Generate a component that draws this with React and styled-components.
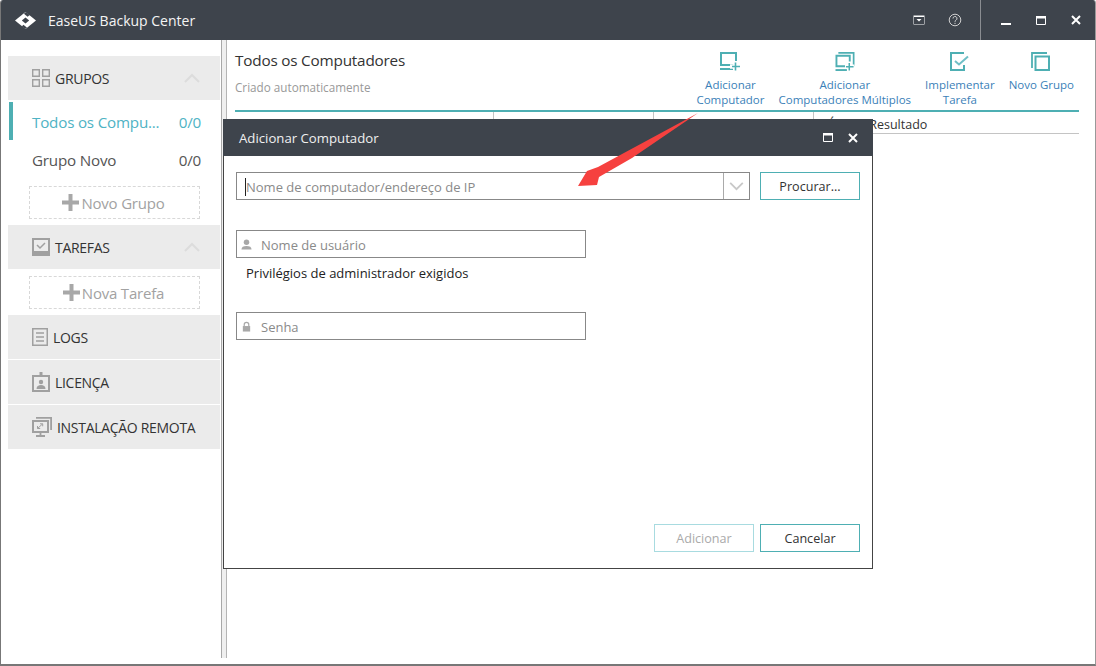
import React from 'react';
import styled, { createGlobalStyle } from 'styled-components';

const font = '"Open Sans", "Noto Sans", sans-serif';
const teal = '#4eafb3';

const GlobalStyle = createGlobalStyle`
  html, body { margin: 0; padding: 0; background: #fff; }
  body { font-family: ${font}; }
  * { box-sizing: border-box; }
`;

const PlusIcon = () => (
  <PlusMark viewBox="0 0 17 17">
    <path d="M0 6.500h17v4H0zM6.500 0h4v17h-4z" fill="#a8a8a8" />
  </PlusMark>
);

const App = () => (
  <>
    <GlobalStyle />
    <Window>
      <TitleBar>
        <Logo viewBox="0 0 20 20" preserveAspectRatio="none">
          <path d="M10 0 L20 10 L10 20 L0 10 Z" fill="#fff" />
          <path d="M10 6.500 L13.500 10 L10 13.500 L6.500 10 Z" fill="#3e444c" />
          <path d="M10.500 0 L14 3.500 L12 5.500 L8.500 2 Z" fill="#3e444c" />
          <path d="M9.500 20 L6.500 17 L8 15 L11.500 18.500 Z" fill="#3e444c" />
        </Logo>
        <AppName>EaseUS Backup Center</AppName>
        <TitleTools>
          <BarIcon viewBox="0 0 12 10" width="12" height="10">
            <path d="M.5.5h11v9H.5z" fill="#fff" />
            <path d="M1 2h10v7H1z" fill="#3e444c" />
            <path d="M3.500 4h5L6 6.500z" fill="#fff" />
          </BarIcon>
          <HelpIcon viewBox="0 0 14 14" width="14" height="14">
            <circle cx="7" cy="7" r="5.800" fill="none" stroke="#d0d0d0" strokeWidth="1" />
            <path d="M5 5.500a2 2 0 1 1 3 1.700c-.7.4-1 .8-1 1.600M7 9.800v1.200" fill="none" stroke="#d0d0d0" strokeWidth="1" />
          </HelpIcon>
        </TitleTools>
        <WindowControls>
          <BarIcon viewBox="0 0 10 10" width="10" height="10">
            <path d="M0 8h10v2H0z" fill="#fff" />
          </BarIcon>
          <BarIcon viewBox="0 0 10 9" width="10" height="9">
            <path d="M.5.5h9v8h-9z" fill="none" stroke="#fff" />
            <path d="M0 0h10v2.500H0z" fill="#fff" />
          </BarIcon>
          <BarIcon viewBox="0 0 10 10" width="10" height="10">
            <path d="M1 1l8 8M9 1l-8 8" stroke="#fff" strokeWidth="2" fill="none" />
          </BarIcon>
        </WindowControls>
      </TitleBar>

      <Body>
        <Sidebar>
          <SectionHead>
            <SideIcon viewBox="0 0 18 18">
              <path d="M.7.7h6.600v6.600H.7zM10.700.7h6.600v6.600h-6.600zM.7 10.700h6.600v6.600H.7zM10.700 10.700h6.600v6.600h-6.600z" fill="none" stroke="#a0a0a0" strokeWidth="1.400" />
            </SideIcon>
            <SectionLabel>GRUPOS</SectionLabel>
            <Chevron viewBox="0 0 16 10"><path d="M1 9l7-7 7 7" fill="none" stroke="#dcdcdc" strokeWidth="2" /></Chevron>
          </SectionHead>
          <GroupRow $active>
            <span>Todos os Compu...</span>
            <span>0/0</span>
          </GroupRow>
          <GroupRow>
            <span>Grupo Novo</span>
            <span>0/0</span>
          </GroupRow>
          <AddSlot $mt={6}><PlusIcon />Novo Grupo</AddSlot>

          <SectionHead $mt={6}>
            <SideIcon viewBox="0 0 18 18">
              <path d="M0 0h18v18H0z" fill="#a0a0a0" />
              <path d="M2 2h14v11H2z" fill="#ececec" />
              <path d="M5 7l3 3 5-5" fill="none" stroke="#a0a0a0" strokeWidth="1.500" />
            </SideIcon>
            <SectionLabel>TAREFAS</SectionLabel>
            <Chevron viewBox="0 0 16 10"><path d="M1 9l7-7 7 7" fill="none" stroke="#dcdcdc" strokeWidth="2" /></Chevron>
          </SectionHead>
          <AddSlot $mt={7}><PlusIcon />Nova Tarefa</AddSlot>

          <SectionHead $mt={6}>
            <SideIcon viewBox="0 0 16 18" $w={16}>
              <path d="M.75.75h14.500v16.500H.75z" fill="none" stroke="#a0a0a0" strokeWidth="1.500" />
              <path d="M4 5h8M4 9h8M4 13h8" stroke="#a0a0a0" strokeWidth="1.500" />
            </SideIcon>
            <SectionLabel>LOGS</SectionLabel>
          </SectionHead>
          <SectionHead $mt={1}>
            <SideIcon viewBox="0 0 18 20" $h={20}>
              <path d="M0 3h18v17H0z" fill="#a0a0a0" />
              <path d="M2 5h14v13H2z" fill="#ececec" />
              <path d="M7.500 0h3v4h-3z" fill="#a0a0a0" />
              <circle cx="9" cy="10" r="2.200" fill="#a0a0a0" />
              <path d="M4.500 17c0-3 2-4 4.500-4s4.500 1 4.500 4z" fill="#a0a0a0" />
            </SideIcon>
            <SectionLabel>LICENÇA</SectionLabel>
          </SectionHead>
          <SectionHead $mt={1}>
            <SideIcon viewBox="0 0 20 20" $w={20} $h={20}>
              <path d="M4 .9h15.100v12.100" fill="none" stroke="#a0a0a0" strokeWidth="1.800" />
              <path d="M1 4h15v11H1z" fill="none" stroke="#a0a0a0" strokeWidth="2" />
              <path d="M4 19h9M8.500 15.500V19" stroke="#a0a0a0" strokeWidth="1.800" />
              <path d="M5.500 11.500l5-4.500M8 6.800h2.700v2.500M5.500 9v2.500h2.700" fill="none" stroke="#a0a0a0" strokeWidth="1" />
            </SideIcon>
            <SectionLabel>INSTALAÇÃO REMOTA</SectionLabel>
          </SectionHead>
        </Sidebar>

        <Splitter />

        <Main>
          <MainHead>
            <div>
              <MainTitle>Todos os Computadores</MainTitle>
              <MainSub>Criado automaticamente</MainSub>
            </div>
            <Toolbar>
              <ToolButton>
                <ToolIcon viewBox="0 0 20 19">
                  <path d="M1 1h15v12H1z" fill="none" stroke={teal} strokeWidth="2" />
                  <path d="M0 17h13" stroke={teal} strokeWidth="2" />
                  <path d="M10 14.500h10M15.500 9v10" stroke="#fff" strokeWidth="4.500" />
                  <path d="M12 14.500h8M15.500 10.500v8" stroke={teal} strokeWidth="1.600" />
                </ToolIcon>
                Adicionar<br />Computador
              </ToolButton>
              <ToolButton>
                <ToolIcon viewBox="0 0 20 20">
                  <path d="M3 .9h16.100v14" fill="none" stroke={teal} strokeWidth="1.800" />
                  <path d="M1 4h14v11H1z" fill="#fff" stroke={teal} strokeWidth="2" />
                  <path d="M0 19h12" stroke={teal} strokeWidth="2" />
                  <path d="M10 15.500h10M14.500 10v10" stroke="#fff" strokeWidth="4.500" />
                  <path d="M11 15.500h8M14.500 11.500v8" stroke={teal} strokeWidth="1.600" />
                </ToolIcon>
                Adicionar<br />Computadores Múltiplos
              </ToolButton>
              <ToolButton>
                <ToolIcon viewBox="0 0 20 19">
                  <path d="M14 1H1v17h13v-5" fill="none" stroke={teal} strokeWidth="2" />
                  <path d="M5 9l4 3.500 9-8" fill="none" stroke="#6fbfc6" strokeWidth="2" />
                </ToolIcon>
                Implementar<br />Tarefa
              </ToolButton>
              <ToolButton>
                <ToolIcon viewBox="0 0 20 19">
                  <path d="M1 16V1h15" fill="none" stroke={teal} strokeWidth="1.800" />
                  <path d="M4.500 4.500h13.500v13.500H4.500z" fill="none" stroke={teal} strokeWidth="2" />
                </ToolIcon>
                Novo Grupo
              </ToolButton>
            </Toolbar>
          </MainHead>
          <TableHead>
            <HeadCell $w={259} />
            <HeadCell $w={160} />
            <HeadCell $w={160} />
            <HeadCell>Último Resultado</HeadCell>
          </TableHead>
        </Main>
      </Body>

      <Dialog>
        <DialogBar>
          <DialogTitle>Adicionar Computador</DialogTitle>
          <DialogControls>
            <BarIcon viewBox="0 0 10 9" width="10" height="9">
              <path d="M.5.5h9v8h-9z" fill="none" stroke="#fff" />
              <path d="M0 0h10v2.500H0z" fill="#fff" />
            </BarIcon>
            <BarIcon viewBox="0 0 10 10" width="10" height="10">
              <path d="M1 1l8 8M9 1l-8 8" stroke="#fff" strokeWidth="2" fill="none" />
            </BarIcon>
          </DialogControls>
        </DialogBar>
        <DialogBody>
          <ComputerRow>
            <ComboBox>
              <ComboText><Caret />Nome de computador/endereço de IP</ComboText>
              <ComboArrow>
                <svg viewBox="0 0 16 10" width="15" height="9">
                  <path d="M1 1l7 7 7-7" fill="none" stroke="#c8c8c8" strokeWidth="2" />
                </svg>
              </ComboArrow>
            </ComboBox>
            <OutlineButton>Procurar...</OutlineButton>
          </ComputerRow>
          <Field $mt={30}>
            <FieldIcon viewBox="0 0 12 12">
              <circle cx="6" cy="3.500" r="3" fill="#a8a8a8" />
              <path d="M.5 11.500c0-3 2-4 5.500-4s5.500 1 5.500 4z" fill="#a8a8a8" />
            </FieldIcon>
            Nome de usuário
          </Field>
          <Hint>Privilégios de administrador exigidos</Hint>
          <Field $mt={25}>
            <FieldIcon viewBox="0 0 12 12">
              <path d="M3.500 6V4a2.500 2.500 0 0 1 5 0v2" fill="none" stroke="#a8a8a8" strokeWidth="1.300" />
              <path d="M2 5.500h8v6H2z" fill="#a8a8a8" />
            </FieldIcon>
            Senha
          </Field>
          <DialogFooter>
            <OutlineButton $disabled>Adicionar</OutlineButton>
            <OutlineButton>Cancelar</OutlineButton>
          </DialogFooter>
        </DialogBody>
      </Dialog>

      <Arrow viewBox="0 0 1096 666" width="1096" height="666">
        <path d="M698 113 L598 167 L587 171 L578 186 L597 185 L599 177 L632 158 Z" fill="#f6413f" />
      </Arrow>
    </Window>
  </>
);

export default App;

const Window = styled.div`
  position: relative;
  width: 1096px;
  height: 666px;
  border: 1px solid #777;
  border-top: 0;
  border-bottom-width: 2px;
  border-right-color: #999;
  border-radius: 3px 3px 0 0;
  background: #fff;
  overflow: hidden;
  display: flex;
  flex-direction: column;
`;

const TitleBar = styled.div`
  height: 40px;
  flex: none;
  margin: 0 -1px;
  background: #3e444c;
  display: flex;
  align-items: center;
  color: #fff;
`;

const Logo = styled.svg`
  width: 21px;
  height: 17px;
  margin-left: 15px;
`;

const AppName = styled.div`
  margin-left: 12px;
  font-size: 14px;
  color: #f4f4f4;
`;

const TitleTools = styled.div`
  margin-left: auto;
  display: flex;
  align-items: center;
  gap: 23px;
  padding-right: 18px;
`;

const WindowControls = styled.div`
  height: 40px;
  width: 116px;
  border-left: 1px solid #8a8d91;
  display: flex;
  align-items: center;
  gap: 25px;
  padding-left: 20px;
`;

const BarIcon = styled.svg`
  display: block;
  flex: none;
`;

const HelpIcon = styled.svg`
  display: block;
`;

const Body = styled.div`
  flex: 1;
  display: flex;
  min-height: 0;
`;

const Sidebar = styled.div`
  width: 212px;
  margin-left: 7px;
  padding-top: 16px;
  flex: none;
`;

const SectionHead = styled.div`
  height: 44px;
  margin-top: ${(p) => p.$mt || 0}px;
  padding-left: 24px;
  background: #ebebeb;
  display: flex;
  align-items: center;
  position: relative;
`;

const SideIcon = styled.svg`
  width: ${(p) => p.$w || 18}px;
  height: ${(p) => p.$h || 18}px;
  flex: none;
`;

const SectionLabel = styled.span`
  margin-left: 5px;
  padding-top: 1px;
  font-size: 14px;
  letter-spacing: -0.300px;
  color: #333;
`;

const Chevron = styled.svg`
  width: 16px;
  height: 10px;
  margin-left: auto;
  margin-right: 20px;
`;

const GroupRow = styled.div`
  height: ${(p) => (p.$active ? 38 : 40)}px;
  margin: ${(p) => (p.$active ? '2px 0 0 1px' : '0 0 0 1px')};
  padding: ${(p) => (p.$active ? '1px 19px 0 19px' : '0 19px')};
  border-left: 4px solid ${(p) => (p.$active ? teal : 'transparent')};
  display: flex;
  align-items: center;
  justify-content: space-between;
  font-size: 15.200px;
  letter-spacing: -0.200px;
  color: ${(p) => (p.$active ? '#4fb3c4' : '#555')};
`;

const AddSlot = styled.div`
  width: 171px;
  height: 33px;
  margin: ${(p) => p.$mt || 0}px 0 0 21px;
  padding-right: 2px;
  border: 1px dashed #d8d8d8;
  display: flex;
  align-items: center;
  justify-content: center;
  gap: 2px;
  font-size: 15px;
  letter-spacing: -0.200px;
  color: #a2a2a2;
`;

const PlusMark = styled.svg`
  width: 17px;
  height: 17px;
  flex: none;
`;

const Splitter = styled.div`
  width: 6px;
  flex: none;
  height: 618px;
  margin-left: 1px;
  background: #efefef;
  border-left: 1px solid #a8a8a8;
  border-right: 1px solid #b4b4b4;
`;

const Main = styled.div`
  flex: 1;
  padding: 0 16px 0 8px;
  min-width: 0;
`;

const MainHead = styled.div`
  height: 72px;
  display: flex;
  justify-content: space-between;
  border-bottom: 2px solid ${teal};
`;

const MainTitle = styled.div`
  margin-top: 10px;
  font-size: 15.300px;
  letter-spacing: -0.200px;
  color: #333;
`;

const MainSub = styled.div`
  margin-top: 9px;
  font-size: 11.700px;
  color: #999;
`;

const Toolbar = styled.div`
  display: flex;
  align-items: flex-start;
  gap: 14px;
  padding: 12px 5px 0 0;
`;

const ToolButton = styled.div`
  display: flex;
  flex-direction: column;
  align-items: center;
  text-align: center;
  font-size: 11.500px;
  line-height: 15px;
  color: #3b7fb8;
`;

const ToolIcon = styled.svg`
  width: 20px;
  height: 19px;
  margin-bottom: 6px;
`;

const TableHead = styled.div`
  height: 22px;
  display: flex;
  border-bottom: 1px solid #c4c4c4;
`;

const HeadCell = styled.div`
  ${(p) => (p.$w ? `width: ${p.$w}px; flex: none;` : 'flex: 1;')}
  border-right: ${(p) => (p.$w ? '1px solid #c4c4c4' : '0')};
  padding-left: 13px;
  font-size: 12.500px;
  line-height: 25px;
  color: #333;
  white-space: nowrap;
`;

const Dialog = styled.div`
  position: absolute;
  left: 222px;
  top: 119px;
  width: 650px;
  height: 450px;
  background: #fff;
  border: 1px solid #444;
  border-top: 0;
  display: flex;
  flex-direction: column;
`;

const DialogBar = styled.div`
  height: 37px;
  flex: none;
  margin: 0 -1px;
  background: #3e444c;
  display: flex;
  align-items: center;
  justify-content: space-between;
  padding: 0 15px 0 16px;
`;

const DialogTitle = styled.div`
  font-size: 13.200px;
  color: #f0f0f0;
`;

const DialogControls = styled.div`
  display: flex;
  align-items: center;
  gap: 15px;
`;

const DialogBody = styled.div`
  flex: 1;
  padding: 16px 12px 16px 12px;
  display: flex;
  flex-direction: column;
`;

const ComputerRow = styled.div`
  display: flex;
  gap: 10px;
`;

const ComboBox = styled.div`
  width: 514px;
  height: 28px;
  border: 1px solid #888;
  display: flex;
`;

const ComboText = styled.div`
  flex: 1;
  display: flex;
  align-items: center;
  padding: 1px 0 0 8px;
  font-size: 13px;
  color: #8a8a8a;
`;

const Caret = styled.span`
  width: 1px;
  height: 18px;
  background: #222;
`;

const ComboArrow = styled.div`
  width: 26px;
  border-left: 1px solid #aaa;
  display: flex;
  align-items: center;
  justify-content: center;
`;

const OutlineButton = styled.div`
  width: 100px;
  height: 28px;
  border: 1px solid ${(p) => (p.$disabled ? '#a8dbe0' : teal)};
  display: flex;
  align-items: center;
  justify-content: center;
  font-size: 12.600px;
  color: ${(p) => (p.$disabled ? '#aaa' : '#333')};
`;

const Field = styled.div`
  width: 350px;
  height: 28px;
  margin-top: ${(p) => p.$mt}px;
  border: 1px solid #888;
  display: flex;
  align-items: center;
  padding: 1px 0 0 4px;
  font-size: 13px;
  color: #8a8a8a;
`;

const FieldIcon = styled.svg`
  width: 11px;
  height: 11px;
  margin-right: 9px;
`;

const Hint = styled.div`
  margin: 5px 0 0 10px;
  height: 24px;
  font-size: 13px;
  line-height: 20px;
  color: #222;
`;

const DialogFooter = styled.div`
  margin-top: auto;
  display: flex;
  justify-content: flex-end;
  gap: 6px;
`;

const Arrow = styled.svg`
  position: absolute;
  left: -1px;
  top: 0;
  pointer-events: none;
`;
